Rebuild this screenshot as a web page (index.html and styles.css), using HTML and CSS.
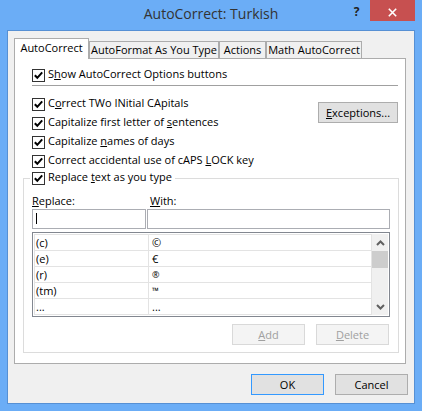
FILE: index.html
```html
<!DOCTYPE html>
<html>
<head>
<meta charset="utf-8">
<title>AutoCorrect: Turkish</title>
<link rel="stylesheet" href="styles.css">
</head>
<body>
<div class="window">
  <div class="titlebar">
    <div class="title">AutoCorrect: Turkish</div>
    <div class="caption">
      <div class="help">?</div>
      <div class="close"><svg width="9" height="9" viewBox="0 0 9 9"><path d="M0.8 0.8 L8.2 8.2 M8.2 0.8 L0.8 8.2" stroke="#fff" stroke-width="1.6" fill="none"/></svg></div>
    </div>
  </div>
  <div class="client">
    <div class="tabs">
      <div class="tab active t1">AutoCorrect</div>
      <div class="tab t2">AutoFormat As You Type</div>
      <div class="tab t3">Actions</div>
      <div class="tab t4">Math AutoCorrect</div>
    </div>
    <div class="panel">
      <div class="check show"><span class="box"><svg class="tick" width="11" height="11" viewBox="0 0 11 11"><path d="M1.8 5.2 L4.3 7.8 L9.2 2.4" fill="none" stroke="#000" stroke-width="2"/></svg></span><span class="label">S<u>h</u>ow AutoCorrect Options buttons</span></div>
      <div class="sep"></div>
      <div class="opts">
        <div class="opt-col">
          <div class="check"><span class="box"><svg class="tick" width="11" height="11" viewBox="0 0 11 11"><path d="M1.8 5.2 L4.3 7.8 L9.2 2.4" fill="none" stroke="#000" stroke-width="2"/></svg></span><span class="label">C<u>o</u>rrect TWo INitial CApitals</span></div>
          <div class="check"><span class="box"><svg class="tick" width="11" height="11" viewBox="0 0 11 11"><path d="M1.8 5.2 L4.3 7.8 L9.2 2.4" fill="none" stroke="#000" stroke-width="2"/></svg></span><span class="label">Capitalize first letter of <u>s</u>entences</span></div>
          <div class="check"><span class="box"><svg class="tick" width="11" height="11" viewBox="0 0 11 11"><path d="M1.8 5.2 L4.3 7.8 L9.2 2.4" fill="none" stroke="#000" stroke-width="2"/></svg></span><span class="label">Capitalize <u>n</u>ames of days</span></div>
          <div class="check"><span class="box"><svg class="tick" width="11" height="11" viewBox="0 0 11 11"><path d="M1.8 5.2 L4.3 7.8 L9.2 2.4" fill="none" stroke="#000" stroke-width="2"/></svg></span><span class="label">Correct accidental use of cAPS <u>L</u>OCK key</span></div>
        </div>
        <div class="btn exceptions"><span><u>E</u>xceptions...</span></div>
      </div>
      <fieldset class="group">
        <legend><span class="check legend-check"><span class="box"><svg class="tick" width="11" height="11" viewBox="0 0 11 11"><path d="M1.8 5.2 L4.3 7.8 L9.2 2.4" fill="none" stroke="#000" stroke-width="2"/></svg></span><span class="label">Replace <u>t</u>ext as you type</span></span></legend>
        <div class="labels">
          <span><u>R</u>eplace:</span>
          <span class="with-label"><u>W</u>ith:</span>
        </div>
        <div class="inputs">
          <div class="input"><span class="caret"></span></div>
          <div class="input"></div>
        </div>
        <div class="list">
          <div class="grid">
            <div class="cell c1">(c)</div><div class="cell c2">©</div>
            <div class="cell c1">(e)</div><div class="cell c2">€</div>
            <div class="cell c1">(r)</div><div class="cell c2 small">®</div>
            <div class="cell c1">(tm)</div><div class="cell c2 small">™</div>
            <div class="cell c1">...</div><div class="cell c2">...</div>
          </div>
          <div class="scroll">
            <div class="arrow"><svg width="9" height="6" viewBox="0 0 9 6"><path d="M1 5 L4.5 1.5 L8 5" fill="none" stroke="#606060" stroke-width="2"/></svg></div>
            <div class="thumb"></div>
            <div class="track"></div>
            <div class="arrow"><svg width="9" height="6" viewBox="0 0 9 6"><path d="M1 1 L4.5 4.5 L8 1" fill="none" stroke="#606060" stroke-width="2"/></svg></div>
          </div>
        </div>
        <div class="gbtns">
          <div class="btn disabled"><span><u>A</u>dd</span></div>
          <div class="btn disabled"><span><u>D</u>elete</span></div>
        </div>
      </fieldset>
    </div>
    <div class="footer">
      <div class="btn default">OK</div>
      <div class="btn">Cancel</div>
    </div>
  </div>
</div>
</body>
</html>
```

FILE: styles.css
```css
* { box-sizing: border-box; }
html, body { margin: 0; padding: 0; }
body {
  background: #6badf6;
  font-family: "Open Sans", "Noto Sans", sans-serif;
  font-size: 11px;
  color: #000;
}
u { text-underline-offset: 1px; }

.window {
  width: 422px;
  height: 411px;
  background: #6badf6;
  display: flex;
  flex-direction: column;
}

.titlebar {
  height: 30px;
  flex: none;
  display: grid;
  grid-template-columns: 1fr auto 1fr;
}
.title {
  grid-column: 2;
  font-size: 14px;
  line-height: 20px;
  padding-top: 4px;
  color: #333;
  white-space: nowrap;
}
.caption {
  grid-column: 3;
  display: flex;
  justify-content: flex-end;
  align-items: flex-start;
  padding-right: 7px;
}
.help {
  width: 27px;
  height: 21px;
  padding-top: 2px;
  font-size: 12px;
  line-height: 19px;
  font-weight: bold;
  color: #222;
  text-align: center;
}
.close {
  width: 45px;
  height: 21px;
  background: #c75050;
  display: flex;
  justify-content: center;
  padding-top: 8px;
}

.client {
  flex: 1;
  margin: 0 7px 7px;
  border: 1px solid #5690d4;
  background: #f0f0f0;
  display: flex;
  flex-direction: column;
}

.tabs {
  display: flex;
  align-items: flex-end;
  height: 20px;
  margin: 7px 0 0 6px;
  position: relative;
  z-index: 1;
}
.tab {
  height: 17px;
  border: 1px solid #acacac;
  border-bottom: none;
  background: #f0f0f0;
  text-align: center;
  line-height: 16px;
  white-space: nowrap;
}
.tab.active {
  height: 21px;
  margin-bottom: -1px;
  background: #fff;
  padding-top: 1px;
  line-height: 15px;
}
.t1 { width: 75px; }
.t2 { width: 130px; }
.t3 { width: 47px; }
.t4 { width: 96px; }

.panel {
  height: 306px;
  flex: none;
  margin: 0 8px 0 6px;
  border: 1px solid #acacac;
  background: #fff;
  padding: 0 6px 0 8px;
  display: flex;
  flex-direction: column;
}

.check {
  display: flex;
  align-items: flex-start;
  gap: 3px;
  height: 19px;
  margin-left: 9px;
  white-space: nowrap;
}
.box {
  width: 13px;
  height: 13px;
  flex: none;
  margin-top: 3px;
  border: 1px solid #333;
  background: #fff;
}
.check .label { line-height: 15px; }
.tick { display: block; }
.show { margin-top: 7px; }
.sep {
  height: 1px;
  background: #a0a0a0;
  margin: 0 1px 0 9px;
}
.opts {
  display: flex;
  justify-content: space-between;
  align-items: flex-start;
  margin-top: 9px;
}
.opt-col { display: flex; flex-direction: column; }

.btn {
  border: 1px solid #adadad;
  background: #e1e1e1;
  display: flex;
  align-items: center;
  justify-content: center;
  width: 73px;
  height: 21px;
  white-space: nowrap;
}
.exceptions {
  width: 80px;
  margin-top: 7px;
  margin-right: 1px;
}
.btn.default { border-color: #3399ff; }
.btn.disabled {
  background: #f4f4f4;
  border-color: #d9d9d9;
  color: #a0a0a0;
}

.group {
  margin: -1px 0 0;
  padding: 0 8px 7px;
  border: 1px solid #dcdcdc;
  min-width: 0;
}
.group legend {
  padding: 0 3px 0 2px;
  margin-left: -2px;
}
.legend-check {
  height: 17px;
  margin-left: 0;
}
.legend-check .box { margin-top: 2px; }
.legend-check .label { margin-top: -1px; }
.labels {
  display: grid;
  grid-template-columns: 115px 243px;
  margin-top: 6px;
  line-height: 16px;
}
.with-label { padding-left: 3px; }
.inputs {
  display: grid;
  grid-template-columns: 114px 243px;
  column-gap: 1px;
}
.input {
  height: 20px;
  border: 1px solid #abadb3;
  background: #fff;
  padding: 3px 0 0 3px;
}
.caret {
  display: block;
  width: 1px;
  height: 11px;
  background: #000;
}

.list {
  margin-top: 3px;
  height: 85px;
  border: 1px solid #828790;
  padding: 1px;
  display: flex;
  background: #fff;
}
.grid {
  width: 338px;
  display: grid;
  grid-template-columns: 114px 223px;
  grid-auto-rows: 16px;
  border-top: 1px solid #e3e3e3;
  border-left: 1px solid #e3e3e3;
  align-self: flex-start;
}
.cell {
  border-right: 1px solid #e3e3e3;
  border-bottom: 1px solid #e3e3e3;
  line-height: 15px;
  white-space: nowrap;
}
.c1 { padding-left: 1px; }
.c2 { padding-left: 3px; }
.small { font-size: 9px; }

.scroll {
  width: 16px;
  height: 81px;
  background: #f0f0f0;
  display: flex;
  flex-direction: column;
}
.arrow {
  height: 17px;
  display: flex;
  align-items: center;
  justify-content: center;
  flex: none;
}
.thumb {
  height: 17px;
  background: #cdcdcd;
  flex: none;
}
.track { flex: 1; }

.gbtns {
  display: flex;
  justify-content: flex-end;
  gap: 11px;
  margin-top: 7px;
  margin-right: 1px;
}

.footer {
  display: flex;
  justify-content: flex-end;
  gap: 11px;
  padding: 10px 6px 0 0;
}
```
